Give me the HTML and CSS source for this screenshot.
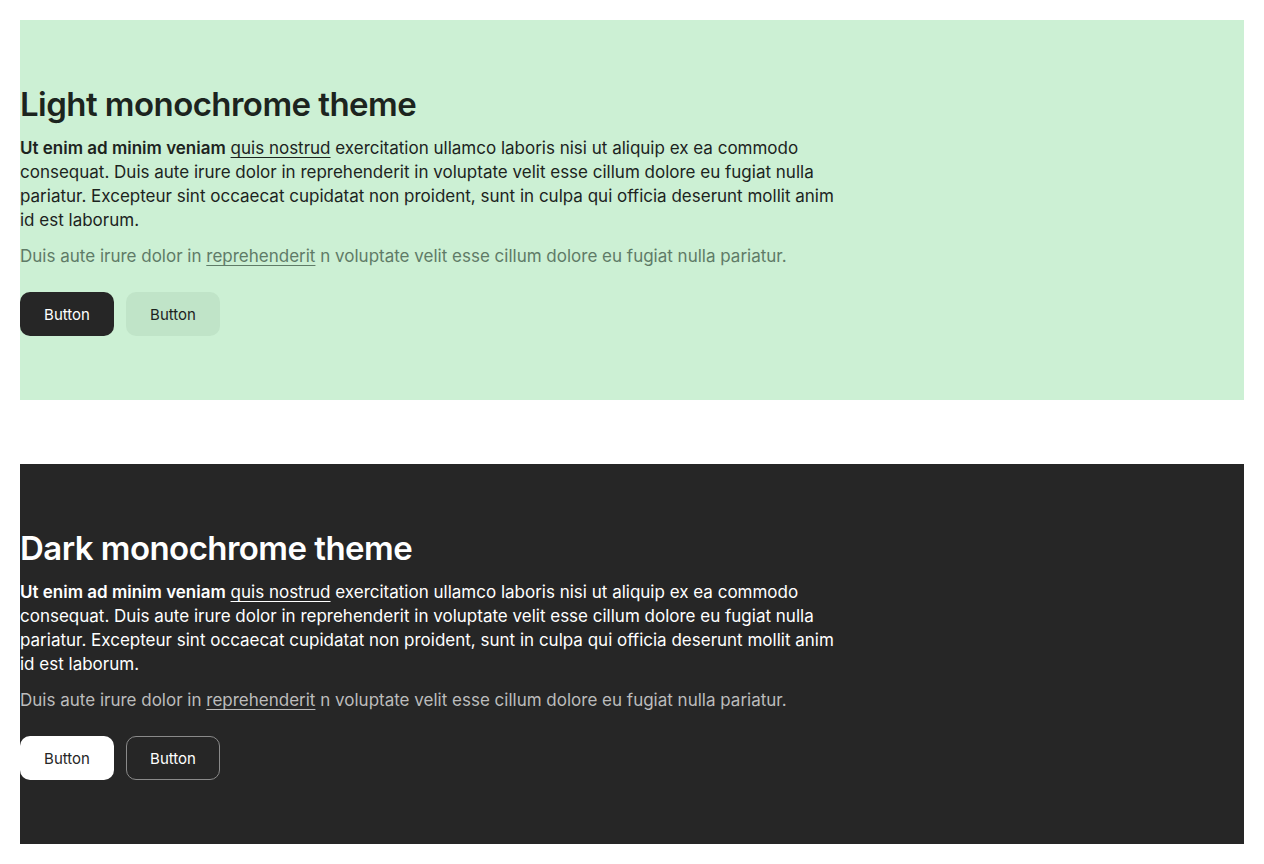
FILE: index.html
```
<!DOCTYPE html>
<html>
<head>
<meta charset="utf-8">
<link rel="stylesheet" href="styles.css">
</head>
<body>
<main class="page">
  <section class="theme theme-light">
    <h1 class="title">Light monochrome theme</h1>
    <p class="lead"><strong>Ut enim ad minim veniam</strong> <a href="#">quis nostrud</a> exercitation ullamco laboris nisi ut aliquip ex ea commodo consequat. Duis aute irure dolor in reprehenderit in voluptate velit esse cillum dolore eu fugiat nulla pariatur. Excepteur sint occaecat cupidatat non proident, sunt in culpa qui officia deserunt mollit anim id est laborum.</p>
    <p class="muted">Duis aute irure dolor in <a href="#">reprehenderit</a> n voluptate velit esse cillum dolore eu fugiat nulla pariatur.</p>
    <div class="actions">
      <button class="btn btn-primary">Button</button>
      <button class="btn btn-secondary">Button</button>
    </div>
  </section>
  <section class="theme theme-dark">
    <h1 class="title">Dark monochrome theme</h1>
    <p class="lead"><strong>Ut enim ad minim veniam</strong> <a href="#">quis nostrud</a> exercitation ullamco laboris nisi ut aliquip ex ea commodo consequat. Duis aute irure dolor in reprehenderit in voluptate velit esse cillum dolore eu fugiat nulla pariatur. Excepteur sint occaecat cupidatat non proident, sunt in culpa qui officia deserunt mollit anim id est laborum.</p>
    <p class="muted">Duis aute irure dolor in <a href="#">reprehenderit</a> n voluptate velit esse cillum dolore eu fugiat nulla pariatur.</p>
    <div class="actions">
      <button class="btn btn-primary">Button</button>
      <button class="btn btn-secondary">Button</button>
    </div>
  </section>
</main>
</body>
</html>
```
FILE: styles.css
```
html, body {
  margin: 0;
  padding: 0;
  background: #ffffff;
}
body {
  padding: 20px;
  font-family: Inter, "Noto Sans", sans-serif;
}
.page {
  display: flex;
  flex-direction: column;
  gap: 64px;
}
.theme {
  height: 380px;
  box-sizing: border-box;
  padding: 64px 0;
}
.title {
  margin: 0;
  font-size: 33px;
  line-height: 40px;
  font-weight: 600;
  letter-spacing: -0.55px;
}
.lead, .muted {
  max-width: 820px;
  margin: 12px 0 0;
  font-size: 17px;
  line-height: 24px;
}
.lead strong { font-weight: 600; }
a { color: inherit; text-decoration: underline; text-underline-offset: 3px; }
.actions {
  display: flex;
  gap: 12px;
  margin-top: 24px;
}
.btn {
  height: 44px;
  width: 94px;
  padding: 0;
  border-radius: 10px;
  font-family: Inter, "Noto Sans", sans-serif;
  font-size: 15px;
  font-weight: 400;
  border: 1px solid transparent;
  cursor: pointer;
}
.theme-light { background: #ccf0d4; color: #1c241e; }
.theme-light .muted { color: #5f7b67; }
.theme-light .btn-primary { background: #262626; color: #ffffff; }
.theme-light .btn-secondary { background: #c0e4c8; color: #1c241e; }
.theme-dark { background: #262626; color: #ffffff; }
.theme-dark .muted { color: #bcbcbc; }
.theme-dark .btn-primary { background: #ffffff; color: #262626; }
.theme-dark .btn-secondary { background: transparent; color: #ffffff; border-color: #8a8a8a; }
```
